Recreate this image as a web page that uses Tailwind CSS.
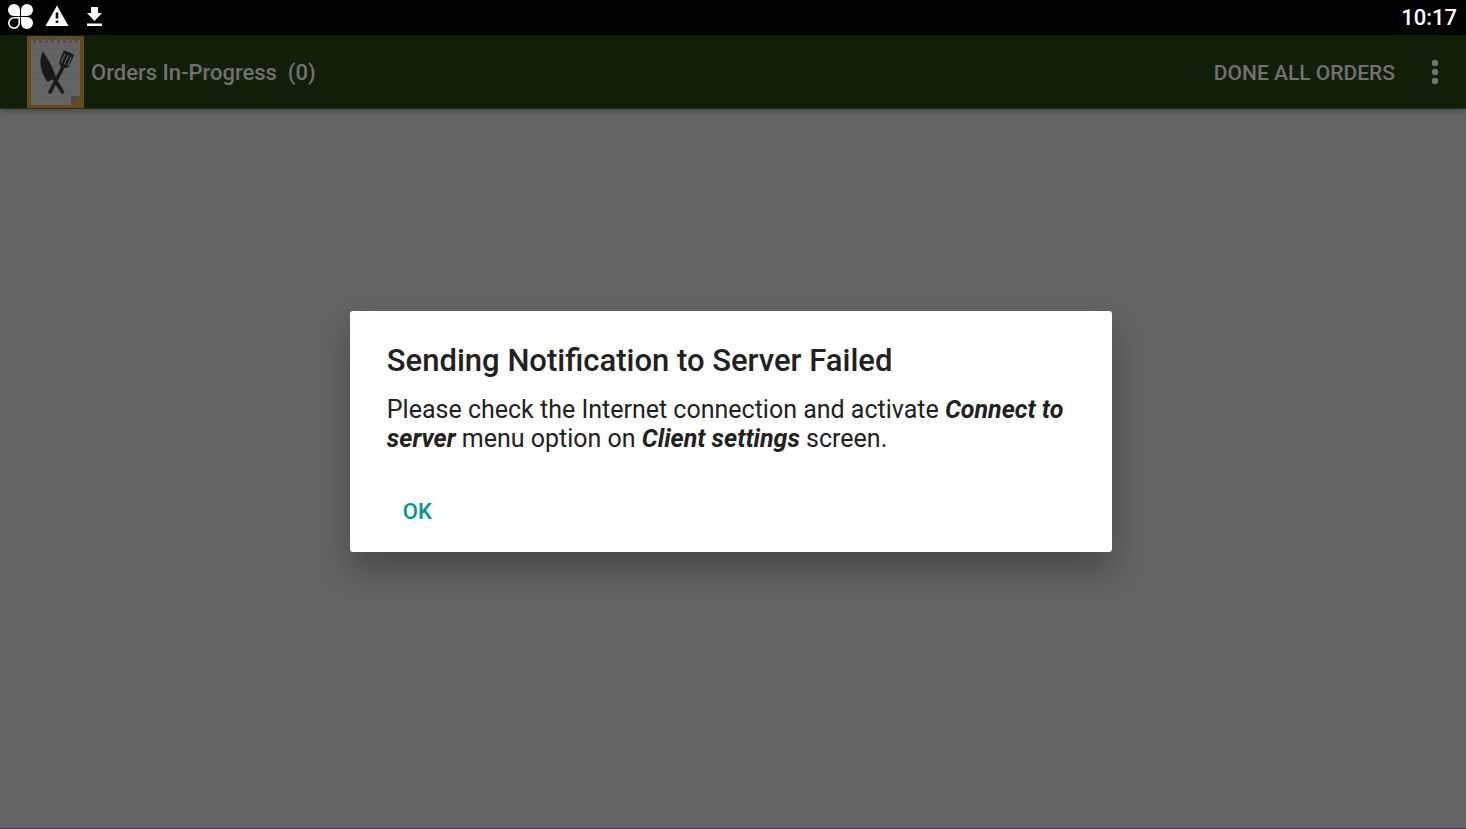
<!DOCTYPE html>
<html lang="en">
<head>
    <meta charset="UTF-8">
    <meta name="viewport" content="width=device-width, initial-scale=1.0">
    <title>Orders In-Progress</title>
    <script src="https://cdn.jsdelivr.net/npm/@tailwindcss/browser@4"></script>
</head>
<body class="flex min-h-screen flex-col bg-[#646464] font-[Roboto,sans-serif]">
    <!-- Status bar -->
    <div class="flex h-[35px] items-center justify-between bg-black px-2 text-white">
        <div class="flex items-center gap-3 pb-[3px]">
            <svg class="size-[25px]" viewBox="0 0 25 25" fill="currentColor" aria-hidden="true">
                <path d="M12 12H6a6 6 0 1 1 6-6z"/>
                <path d="M13 12V6a6 6 0 1 1 6 6z"/>
                <path d="M13 13h6a6 6 0 1 1-6 6z"/>
                <path d="M11.2 13.8V19A5.2 5.2 0 1 1 6 13.8z" fill="none" stroke="currentColor" stroke-width="1.6"/>
            </svg>
            <svg class="size-6" viewBox="0 0 24 24" aria-hidden="true">
                <path d="M12 1.5 23.5 22H.5z" fill="currentColor"/>
                <path d="M10.7 8.5h2.6v6h-2.6zM10.7 16.5h2.6V19h-2.6z" fill="#000"/>
            </svg>
            <svg class="ml-1 size-[19px]" viewBox="0 0 19 19" fill="currentColor" aria-hidden="true">
                <path d="M6 0h7v6h4l-7.500 8L2 6h4zM2 16.500h15V19H2z"/>
            </svg>
        </div>
        <time class="pr-px text-[22px] leading-6 font-medium">10:17</time>
    </div>

    <!-- App bar -->
    <header class="flex h-[74px] items-center border-b border-[#20301a] bg-[#111f0a] pl-[27px] text-[#717171] shadow-[0_2px_5px_rgba(0,0,0,0.3)]">
        <svg class="h-[73px] w-[57px]" viewBox="0 0 57 73" aria-hidden="true">
            <path d="M0 1h57v72H0z" fill="#674b16"/>
            <path d="M4 3h49v58l-9 9H4z" fill="#646464"/>
            <path d="M6 14h45M6 20h45M6 26h45M6 32h45M6 38h45M6 44h45M6 50h45M6 56h45M6 62h37" stroke="#5e5e5e" stroke-width="1"/>
            <path d="M4 2h49v3H4z" fill="#674b16"/>
            <path d="M7.500 1v7M13.500 1v7M19.500 1v7M25.500 1v7M31.500 1v7M37.500 1v7M43.500 1v7M49.500 1v7" stroke="#505050" stroke-width="3"/>
            <path d="M53 61h-9v9z" fill="#494949"/>
            <path d="M53 61v9h-9z" fill="#674b16"/>
            <g fill="#191919">
                <path d="M15.700 16.500C22 25 26 33 28.500 41l-.5 2-7.500 4C14 38 11 26 15.700 16.500z"/>
                <path d="M36.500 16q.5-1 1.500-.5l8 3.500q1.300.6.7 2L42.500 30q-1.500 3.500-5 3t-5-3.500q-.8-2 .5-4.500z"/>
            </g>
            <path d="M25.500 41 35.500 57M23 57 36 32" fill="none" stroke="#191919" stroke-width="3.600" stroke-linecap="round"/>
            <path d="m38 19-3.700 8.500M41.200 20.500l-3.900 9M44.300 22l-3.700 8.500" stroke="#5c5c5c" stroke-width="1.300"/>
        </svg>
        <h1 class="flex-1 pt-0.5 pl-[7px] text-[22px] leading-6 font-medium whitespace-pre">Orders In-Progress  (0)</h1>
        <button type="button" class="px-4 pt-0.5 text-[21px] leading-6 font-medium uppercase">Done all orders</button>
        <button type="button" class="mr-[7px] flex size-12 items-center justify-center" aria-label="More options">
            <svg class="h-[26px] w-2" viewBox="0 0 8 26" fill="currentColor" aria-hidden="true">
                <circle cx="4" cy="4" r="3.200"/>
                <circle cx="4" cy="13" r="3.200"/>
                <circle cx="4" cy="22" r="3.200"/>
            </svg>
        </button>
    </header>

    <!-- Order list, empty; the dialog is centred over the whole area below the status bar -->
    <main class="flex-1 border-b border-[#3b3560]"></main>

    <div class="absolute inset-x-0 top-[35px] bottom-px flex items-center justify-center pr-1">
        <div role="alertdialog" aria-modal="true" aria-labelledby="dialog-title" aria-describedby="dialog-text" class="w-[52vw] rounded-[3px] bg-white px-[37px] pt-8 pb-[13px] text-[#212121] shadow-[0_18px_34px_rgba(0,0,0,0.28)]">
            <h2 id="dialog-title" class="text-[31px] leading-9 font-medium">Sending Notification to Server Failed</h2>
            <p id="dialog-text" class="pt-4 text-[25px] leading-[29px]">Please check the Internet connection and activate <b><i>Connect to server</i></b> menu option on <b><i>Client settings</i></b> screen.</p>
            <button type="button" class="mt-[30px] h-14 px-4 text-[22px] font-medium text-[#009688]">OK</button>
        </div>
    </div>
</body>
</html>
